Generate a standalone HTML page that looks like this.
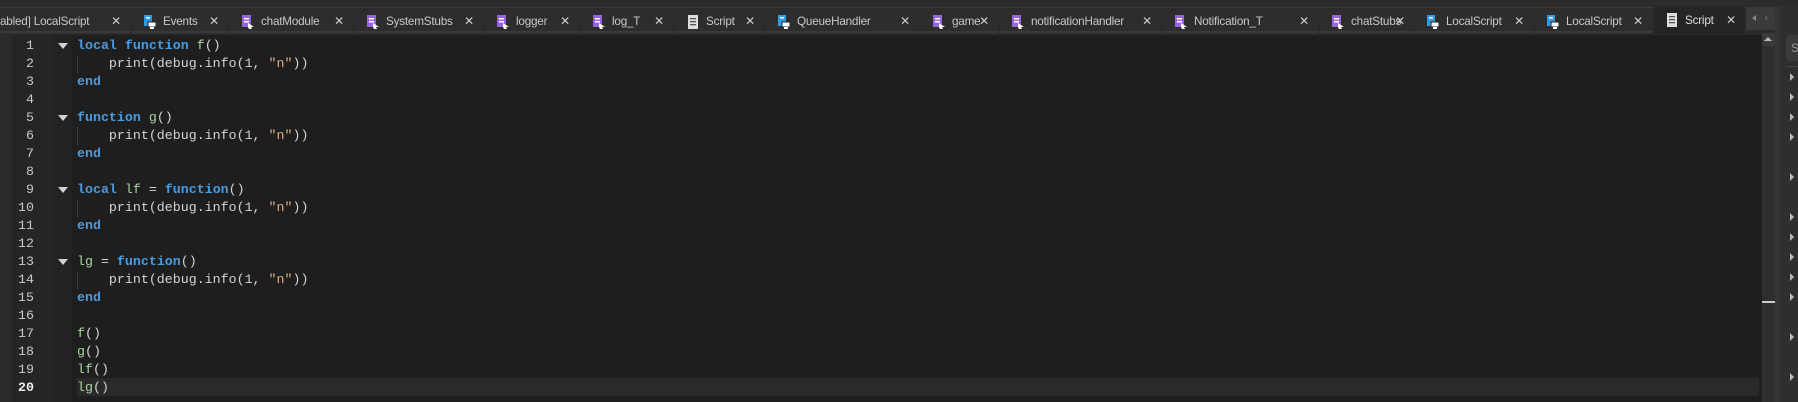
<!DOCTYPE html>
<html><head><meta charset="utf-8"><style>
body{margin:0;width:1798px;height:402px;background:#1e1e1e;overflow:hidden;position:relative;font-family:"Liberation Sans",sans-serif}
.top{position:absolute;left:0;top:0;width:1798px;height:7px;background:#2b2b2b;border-bottom:1px solid #3a3a3a}
.bar{position:absolute;left:0;top:8px;width:1798px;height:27px;background:#2b2b2b}
.tab{position:absolute;top:10px;height:23px;background:#2d2d2d;border-bottom:2px solid #3a3a3a;color:#c8c8c8;font-size:11.7px;letter-spacing:-0.2px;line-height:23px;white-space:nowrap;overflow:hidden;box-sizing:border-box;padding-left:31px}
.tab.act{top:7px;height:27px;background:#252525;border-bottom:none;color:#ddd;line-height:27px}
.tab .x{position:absolute;right:9px;top:0;font-size:12px;color:#ccc}
.ic{position:absolute;left:12px;top:5px;width:12px;height:14px}
.act .ic{top:6px}
.gut1{position:absolute;left:0;top:35px;width:12px;height:367px;background:#2a2a2a}
.gut2{position:absolute;left:12px;top:35px;width:41px;height:367px;background:#252525}
.gut3{position:absolute;left:53px;top:35px;width:18px;height:367px;background:#222}
.ln{position:absolute;left:12px;width:22px;text-align:right;font-family:"Liberation Mono",monospace;font-size:13.3px;color:#c8c8c8;height:18px;line-height:18px}
.code{position:absolute;left:77px;font-family:"Liberation Mono",monospace;font-size:13.3px;color:#d4d4d4;height:18px;line-height:18px;white-space:pre}
.k{color:#4b9be0;font-weight:bold}
.g{color:#a9d6a0}
.s{color:#e0a888}
.fold{position:absolute;left:58px;width:0;height:0;border-left:5px solid transparent;border-right:5px solid transparent;border-top:6px solid #cfcfcf}
.guide{position:absolute;left:77px;width:1px;height:18px;background:#3a3a3a}
</style></head><body>
<div class="top"></div><div class="bar"></div>

<div class="tab" style="left:0;width:130px;padding-left:0">abled] LocalScript<span class="x">✕</span></div>
<div class="tab" style="left:132px;width:96px"><svg class="ic" viewBox="0 0 12 14"><rect x="0" y="0" width="8" height="11" fill="#2f9ae8"/><rect x="2" y="2" width="4" height="1.5" fill="#fff"/><rect x="4" y="7" width="8" height="5" fill="#fff" stroke="#222"/><rect x="6" y="12" width="4" height="2" fill="#fff"/></svg>Events<span class="x">✕</span></div>
<div class="tab" style="left:230px;width:123px"><svg class="ic" viewBox="0 0 12 14"><rect x="0" y="0" width="9" height="12" fill="#9a64e0"/><rect x="2" y="3" width="5" height="1.5" fill="#fff"/><rect x="2" y="6" width="5" height="1.5" fill="#fff"/><path d="M6 8 L12 12 L9 12 L10 14 L7 14 L6 12Z" fill="#fff"/></svg>chatModule<span class="x">✕</span></div>
<div class="tab" style="left:355px;width:128px"><svg class="ic" viewBox="0 0 12 14"><rect x="0" y="0" width="9" height="12" fill="#9a64e0"/><rect x="2" y="3" width="5" height="1.5" fill="#fff"/><rect x="2" y="6" width="5" height="1.5" fill="#fff"/><path d="M6 8 L12 12 L9 12 L10 14 L7 14 L6 12Z" fill="#fff"/></svg>SystemStubs<span class="x">✕</span></div>
<div class="tab" style="left:485px;width:94px"><svg class="ic" viewBox="0 0 12 14"><rect x="0" y="0" width="9" height="12" fill="#9a64e0"/><rect x="2" y="3" width="5" height="1.5" fill="#fff"/><rect x="2" y="6" width="5" height="1.5" fill="#fff"/><path d="M6 8 L12 12 L9 12 L10 14 L7 14 L6 12Z" fill="#fff"/></svg>logger<span class="x">✕</span></div>
<div class="tab" style="left:581px;width:92px"><svg class="ic" viewBox="0 0 12 14"><rect x="0" y="0" width="9" height="12" fill="#9a64e0"/><rect x="2" y="3" width="5" height="1.5" fill="#fff"/><rect x="2" y="6" width="5" height="1.5" fill="#fff"/><path d="M6 8 L12 12 L9 12 L10 14 L7 14 L6 12Z" fill="#fff"/></svg>log_T<span class="x">✕</span></div>
<div class="tab" style="left:675px;width:89px"><svg class="ic" viewBox="0 0 12 14"><rect x="1" y="0" width="10" height="14" fill="#ddd"/><rect x="3" y="3" width="6" height="1.3" fill="#555"/><rect x="3" y="6" width="6" height="1.3" fill="#555"/><rect x="3" y="9" width="6" height="1.3" fill="#555"/></svg>Script<span class="x">✕</span></div>
<div class="tab" style="left:766px;width:153px"><svg class="ic" viewBox="0 0 12 14"><rect x="0" y="0" width="8" height="11" fill="#2f9ae8"/><rect x="2" y="2" width="4" height="1.5" fill="#fff"/><rect x="4" y="7" width="8" height="5" fill="#fff" stroke="#222"/><rect x="6" y="12" width="4" height="2" fill="#fff"/></svg>QueueHandler<span class="x">✕</span></div>
<div class="tab" style="left:921px;width:77px"><svg class="ic" viewBox="0 0 12 14"><rect x="0" y="0" width="9" height="12" fill="#9a64e0"/><rect x="2" y="3" width="5" height="1.5" fill="#fff"/><rect x="2" y="6" width="5" height="1.5" fill="#fff"/><path d="M6 8 L12 12 L9 12 L10 14 L7 14 L6 12Z" fill="#fff"/></svg>game<span class="x">✕</span></div>
<div class="tab" style="left:1000px;width:161px"><svg class="ic" viewBox="0 0 12 14"><rect x="0" y="0" width="9" height="12" fill="#9a64e0"/><rect x="2" y="3" width="5" height="1.5" fill="#fff"/><rect x="2" y="6" width="5" height="1.5" fill="#fff"/><path d="M6 8 L12 12 L9 12 L10 14 L7 14 L6 12Z" fill="#fff"/></svg>notificationHandler<span class="x">✕</span></div>
<div class="tab" style="left:1163px;width:155px"><svg class="ic" viewBox="0 0 12 14"><rect x="0" y="0" width="9" height="12" fill="#9a64e0"/><rect x="2" y="3" width="5" height="1.5" fill="#fff"/><rect x="2" y="6" width="5" height="1.5" fill="#fff"/><path d="M6 8 L12 12 L9 12 L10 14 L7 14 L6 12Z" fill="#fff"/></svg>Notification_T<span class="x">✕</span></div>
<div class="tab" style="left:1320px;width:94px"><svg class="ic" viewBox="0 0 12 14"><rect x="0" y="0" width="9" height="12" fill="#9a64e0"/><rect x="2" y="3" width="5" height="1.5" fill="#fff"/><rect x="2" y="6" width="5" height="1.5" fill="#fff"/><path d="M6 8 L12 12 L9 12 L10 14 L7 14 L6 12Z" fill="#fff"/></svg>chatStubs<span class="x">✕</span></div>
<div class="tab" style="left:1415px;width:118px"><svg class="ic" viewBox="0 0 12 14"><rect x="0" y="0" width="8" height="11" fill="#2f9ae8"/><rect x="2" y="2" width="4" height="1.5" fill="#fff"/><rect x="4" y="7" width="8" height="5" fill="#fff" stroke="#222"/><rect x="6" y="12" width="4" height="2" fill="#fff"/></svg>LocalScript<span class="x">✕</span></div>
<div class="tab" style="left:1535px;width:117px"><svg class="ic" viewBox="0 0 12 14"><rect x="0" y="0" width="8" height="11" fill="#2f9ae8"/><rect x="2" y="2" width="4" height="1.5" fill="#fff"/><rect x="4" y="7" width="8" height="5" fill="#fff" stroke="#222"/><rect x="6" y="12" width="4" height="2" fill="#fff"/></svg>LocalScript<span class="x">✕</span></div>
<div class="tab act" style="left:1654px;width:91px"><svg class="ic" viewBox="0 0 12 14"><rect x="1" y="0" width="10" height="14" fill="#ddd"/><rect x="3" y="3" width="6" height="1.3" fill="#555"/><rect x="3" y="6" width="6" height="1.3" fill="#555"/><rect x="3" y="9" width="6" height="1.3" fill="#555"/></svg>Script<span class="x">✕</span></div>
<div style="position:absolute;left:1746px;top:7px;width:29px;height:23px;background:#3a3a3a"><div style="position:absolute;left:6px;top:8px;border-right:4px solid #888;border-top:3.5px solid transparent;border-bottom:3.5px solid transparent"></div><div style="position:absolute;left:19px;top:8px;border-left:4px solid #555;border-top:3.5px solid transparent;border-bottom:3.5px solid transparent"></div></div>

<div class="gut1"></div><div class="gut2"></div><div class="gut3"></div>
<div style="position:absolute;left:77px;top:378px;width:1682px;height:18px;background:#2a2a2a"></div>

<div class="ln" style="top:37px">1</div><div class="ln" style="top:55px">2</div><div class="ln" style="top:73px">3</div><div class="ln" style="top:91px">4</div><div class="ln" style="top:109px">5</div><div class="ln" style="top:127px">6</div><div class="ln" style="top:145px">7</div><div class="ln" style="top:163px">8</div><div class="ln" style="top:181px">9</div><div class="ln" style="top:199px">10</div><div class="ln" style="top:217px">11</div><div class="ln" style="top:235px">12</div><div class="ln" style="top:253px">13</div><div class="ln" style="top:271px">14</div><div class="ln" style="top:289px">15</div><div class="ln" style="top:307px">16</div><div class="ln" style="top:325px">17</div><div class="ln" style="top:343px">18</div><div class="ln" style="top:361px">19</div><div class="ln" style="top:379px;font-weight:bold;color:#eee">20</div>

<div class="fold" style="top:43px"></div><div class="fold" style="top:115px"></div><div class="fold" style="top:187px"></div><div class="fold" style="top:259px"></div>
<div class="guide" style="top:55px"></div><div class="guide" style="top:127px"></div><div class="guide" style="top:199px"></div><div class="guide" style="top:271px"></div>

<div class="code" style="top:37px"><span class="k">local</span> <span class="k">function</span> <span class="g">f</span>()</div>
<div class="code" style="top:55px">    print(debug.info(1, <span class="s">"n"</span>))</div>
<div class="code" style="top:73px"><span class="k">end</span></div>
<div class="code" style="top:109px"><span class="k">function</span> <span class="g">g</span>()</div>
<div class="code" style="top:127px">    print(debug.info(1, <span class="s">"n"</span>))</div>
<div class="code" style="top:145px"><span class="k">end</span></div>
<div class="code" style="top:181px"><span class="k">local</span> <span class="g">lf</span> = <span class="k">function</span>()</div>
<div class="code" style="top:199px">    print(debug.info(1, <span class="s">"n"</span>))</div>
<div class="code" style="top:217px"><span class="k">end</span></div>
<div class="code" style="top:253px"><span class="g">lg</span> = <span class="k">function</span>()</div>
<div class="code" style="top:271px">    print(debug.info(1, <span class="s">"n"</span>))</div>
<div class="code" style="top:289px"><span class="k">end</span></div>
<div class="code" style="top:325px"><span class="g">f</span>()</div>
<div class="code" style="top:343px"><span class="g">g</span>()</div>
<div class="code" style="top:361px"><span class="g">lf</span>()</div>
<div class="code" style="top:379px"><span class="g">lg</span>()</div>

<div style="position:absolute;left:1762px;top:33px;width:13px;height:369px;background:#2e2e2e"></div>
<div style="position:absolute;left:1762px;top:33px;width:13px;height:13px;background:#3a3a3a"><div style="position:absolute;left:2px;top:4px;border-bottom:4px solid #bbb;border-left:4.5px solid transparent;border-right:4.5px solid transparent"></div></div>
<div style="position:absolute;left:1762px;top:301px;width:13px;height:2px;background:#ccc"></div>
<div style="position:absolute;left:1775px;top:6px;width:5px;height:396px;background:#333"></div>
<div style="position:absolute;left:1780px;top:6px;width:18px;height:396px;background:#2e2e2e"></div>
<div style="position:absolute;left:1786px;top:35px;width:12px;height:26px;background:#3a3a3a;border-radius:4px 0 0 4px;color:#999;font-size:12px;line-height:26px;padding-left:5px;box-sizing:border-box;overflow:hidden">S</div>
<div style="position:absolute;left:1786px;top:66px;width:12px;height:1px;background:#444"></div>
<script>
[77,97,117,137,177,217,237,257,277,297,337,377].forEach(function(y){var d=document.createElement('div');d.style.cssText='position:absolute;left:1790px;top:'+(y-4)+'px;border-left:4px solid #bbb;border-top:4px solid transparent;border-bottom:4px solid transparent';document.body.appendChild(d);});
</script>
</body></html>
